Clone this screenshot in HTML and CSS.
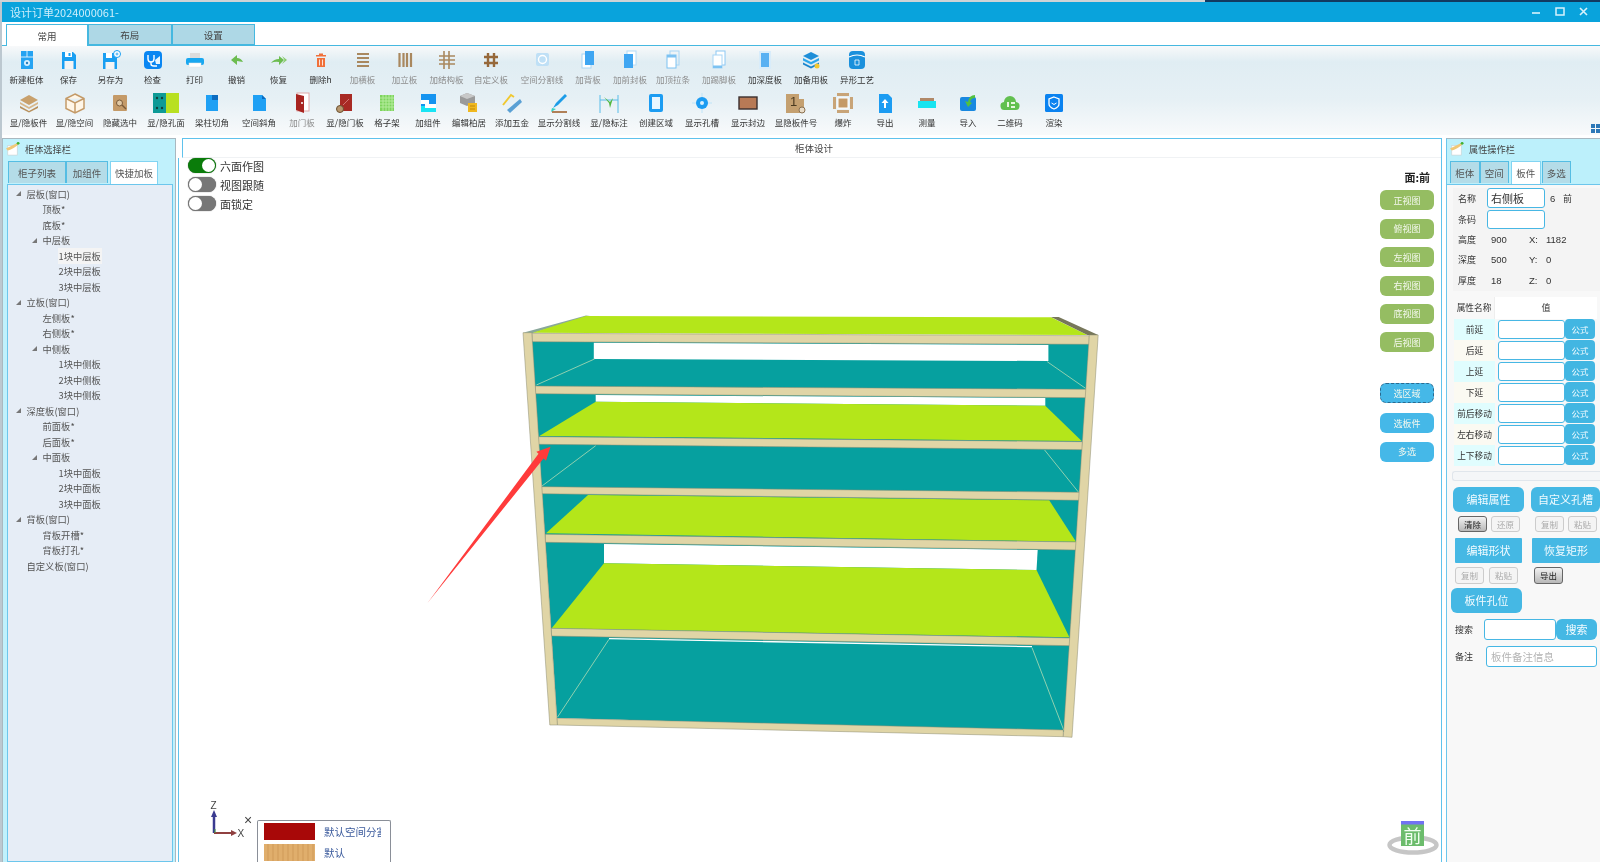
FILE: index.html
```html
<!DOCTYPE html>
<html lang="zh">
<head>
<meta charset="utf-8">
<title>设计订单</title>
<link rel="stylesheet" href="styles.css">
</head>
<body>
<div class="desk">
  <div class="strip"></div>
  <div class="window">
    <header class="titlebar">
      <span class="title">设计订单2024000061-</span>
      <div class="winctl">
        <svg viewBox="0 0 24 20" class="wc"><path d="M8 11h8" stroke="#d8f2fc" stroke-width="1.6"/></svg>
        <svg viewBox="0 0 24 20" class="wc"><rect x="8" y="6" width="8" height="7" fill="none" stroke="#d8f2fc" stroke-width="1.5"/></svg>
        <svg viewBox="0 0 24 20" class="wc"><path d="M8 6l7 7M15 6l-7 7" stroke="#d8f2fc" stroke-width="1.6"/></svg>
      </div>
    </header>
    <nav class="tabbar">
      <div class="toptab active">常用</div>
      <div class="toptab">布局</div>
      <div class="toptab">设置</div>
    </nav>
    <section class="ribbon">
      <div class="toolrow row1">
        <div class="tool"><svg class="ico" viewBox="0 0 24 24"><rect x="6" y="3" width="12" height="18" fill="#25a3f2"/><path d="M6 9h12M12 3v6" stroke="#fff" stroke-width=".8"/><circle cx="12" cy="15" r="3" fill="#d8f0ff"/><circle cx="12" cy="15" r="1.2" fill="#2a80c0"/></svg><span>新建柜体</span></div>
        <div class="tool"><svg class="ico" viewBox="0 0 24 24"><path d="M5 4h11l3 3v14H5z" fill="#1a9ff2"/><rect x="8" y="4" width="7" height="5" fill="#fff"/><rect x="11.500" y="5" width="2" height="3" fill="#1a9ff2"/><rect x="7.500" y="13" width="9" height="8" fill="#f4f4f4"/></svg><span>保存</span></div>
        <div class="tool"><svg class="ico" viewBox="0 0 24 24"><path d="M4 5h11l3 3v13H4z" fill="#1a9ff2"/><rect x="7" y="5" width="6" height="5" fill="#fff"/><rect x="6.500" y="14" width="9" height="7" fill="#f4f4f4"/><circle cx="18" cy="6" r="3.500" fill="#fff" stroke="#1a9ff2"/><path d="M16.500 6h3M18 4.500v3" stroke="#1a9ff2" stroke-width=".8"/></svg><span>另存为</span></div>
        <div class="tool"><svg class="ico" viewBox="0 0 24 24"><rect x="3" y="3" width="18" height="18" rx="4" fill="#0a86f2"/><path d="M7 7v4q0 3 3 3t3-3V7M10 14v2q0 2 3 2h3" fill="none" stroke="#fff" stroke-width="1.4"/><path d="M14 12l5-4v8h-4z" fill="#e8f6ff"/></svg><span>检查</span></div>
        <div class="tool"><svg class="ico" viewBox="0 0 24 24"><rect x="7" y="5" width="10" height="5" fill="#dcdcdc"/><rect x="3" y="10" width="18" height="7" rx="2" fill="#18a7f0"/><rect x="6" y="15" width="12" height="4" fill="#fff" stroke="#e4e4e4" stroke-width=".5"/></svg><span>打印</span></div>
        <div class="tool"><svg class="ico" viewBox="0 0 24 24"><path d="M6 12l6-5v3q4 0 6 4l-6-1v4z" fill="#6cbc50"/></svg><span>撤销</span></div>
        <div class="tool"><svg class="ico" viewBox="0 0 24 24"><path d="M17 12l-5-4v3q-5 0-8 4 4-2 8-1v3z" fill="#6cbc50"/><path d="M15 8l5 4-5 4 2.500-4z" fill="#86ca68"/></svg><span>恢复</span></div>
        <div class="tool"><svg class="ico" viewBox="0 0 24 24"><path d="M10 7V5.500h4V7h3v1.500H7V7zM8 10h8v9H8z" fill="#f0703a"/><path d="M10.500 11.500v6M13.500 11.500v6" stroke="#fff" stroke-width=".8"/></svg><span>删除h</span></div>
        <div class="tool off"><svg class="ico" viewBox="0 0 24 24"><path d="M6 6h12M6 10h12M6 14h12M6 18h12" stroke="#a9885f" stroke-width="2.200"/></svg><span>加横板</span></div>
        <div class="tool off"><svg class="ico" viewBox="0 0 24 24"><path d="M6.500 5v14M10.500 5v14M14 5v14M18 5v14" stroke="#a9885f" stroke-width="2.200"/></svg><span>加立板</span></div>
        <div class="tool off"><svg class="ico" viewBox="0 0 24 24"><path d="M9 3v18M14 3v18M4 8h16M4 12h16M4 16h16" stroke="#a9885f" stroke-width="1.600"/></svg><span>加结构板</span></div>
        <div class="tool off"><svg class="ico" viewBox="0 0 24 24"><path d="M9 5v14M15 5v14M5 9h14M5 15h14" stroke="#96683a" stroke-width="2.400"/></svg><span>自定义板</span></div>
        <div class="tool off wide"><svg class="ico" viewBox="0 0 24 24"><rect x="6" y="5" width="13" height="13" rx="2" fill="#bfe0f6"/><circle cx="12.500" cy="11.500" r="4" fill="none" stroke="#fff" stroke-width="1.400"/></svg><span>空间分割线</span></div>
        <div class="tool off"><svg class="ico" viewBox="0 0 24 24"><rect x="6" y="6" width="9" height="14" fill="#fff" stroke="#a8d6f6"/><rect x="9" y="3" width="9" height="14" fill="#3fa6f2"/></svg><span>加背板</span></div>
        <div class="tool off"><svg class="ico" viewBox="0 0 24 24"><rect x="9" y="3" width="9" height="14" fill="#fff" stroke="#b4dcf8"/><rect x="6" y="6" width="9" height="14" fill="#3fa6f2"/></svg><span>加前封板</span></div>
        <div class="tool off"><svg class="ico" viewBox="0 0 24 24"><rect x="9" y="3" width="9" height="14" fill="none" stroke="#a8d6f6"/><rect x="6" y="7" width="9" height="13" fill="#fff" stroke="#7cc2f2"/><rect x="6" y="7" width="9" height="2.500" fill="#7cc2f2"/></svg><span>加顶拉条</span></div>
        <div class="tool off"><svg class="ico" viewBox="0 0 24 24"><rect x="9" y="3" width="9" height="14" fill="#fff" stroke="#8cc8f4"/><rect x="6" y="7" width="9" height="13" fill="#fff" stroke="#a8d6f6"/><rect x="6" y="17.500" width="9" height="2.500" fill="#7cc2f2"/></svg><span>加踢脚板</span></div>
        <div class="tool"><svg class="ico" viewBox="0 0 24 24"><rect x="6" y="3" width="12" height="18" fill="#d8ecfa"/><rect x="8" y="5" width="8" height="14" fill="#58b0f2"/></svg><span>加深度板</span></div>
        <div class="tool"><svg class="ico" viewBox="0 0 24 24"><path d="M12 4l8 4-8 4-8-4z" fill="#1e8ed8"/><path d="M4 10l8 4 8-4v2.500l-8 4-8-4z" fill="#2aa6ec"/><path d="M4 14.500l8 4 8-4v2l-8 4-8-4z" fill="#1a84cc"/><circle cx="18" cy="18" r="2.500" fill="#f4c830"/></svg><span>加备用板</span></div>
        <div class="tool"><svg class="ico" viewBox="0 0 24 24"><rect x="4" y="3" width="16" height="18" rx="4" fill="#1a90dc"/><path d="M4 9q8-4 16 0" fill="none" stroke="#fff" stroke-width="1.200"/><path d="M10 12h4v5h-4z" fill="none" stroke="#fff" stroke-width=".8"/></svg><span>异形工艺</span></div>
      </div>
      <div class="toolrow row2">
        <div class="tool"><svg class="ico" viewBox="0 0 24 24"><path d="M12 4l9 5-9 5-9-5z" fill="#c8a06c"/><path d="M3 11l9 5 9-5v2l-9 5-9-5z" fill="#d8b88c"/><path d="M3 15l9 5 9-5v2l-9 4.500-9-4.500z" fill="#b8905c"/></svg><span>显/隐板件</span></div>
        <div class="tool"><svg class="ico" viewBox="0 0 24 24"><path d="M12 3l9 4.500v10L12 22l-9-4.500v-10zM3 7.500l9 4.500 9-4.500M12 12v10" fill="#fff6e8" stroke="#c49a68" stroke-width="1.500"/></svg><span>显/隐空间</span></div>
        <div class="tool"><svg class="ico" viewBox="0 0 24 24"><rect x="5" y="4" width="14" height="16" rx="1" fill="#c49a68"/><circle cx="11.500" cy="12" r="3" fill="#e0c8a4" stroke="#7a5a38"/><path d="M14 14l4 4" stroke="#7a5a38" stroke-width="1.500"/></svg><span>隐藏选中</span></div>
        <div class="tool"><svg class="ico icob" viewBox="0 0 28 24"><rect x="1" y="2" width="13" height="20" fill="#0e9a96"/><rect x="14" y="2" width="13" height="20" fill="#b8e022"/><g fill="#12403c"><circle cx="5" cy="7" r="1.200"/><circle cx="10" cy="7" r="1.200"/><circle cx="5" cy="17" r="1.200"/><circle cx="10" cy="17" r="1.200"/></g></svg><span>显/隐孔面</span></div>
        <div class="tool"><svg class="ico" viewBox="0 0 24 24"><path d="M6 4h12v16H6z" fill="#1fa0f4"/><rect x="12" y="4" width="6" height="5" fill="#0c6cc0"/></svg><span>梁柱切角</span></div>
        <div class="tool"><svg class="ico" viewBox="0 0 24 24"><path d="M6 4h9l4 4v12H6z" fill="#1fa0f4"/><path d="M15 4l4 4h-4z" fill="#0c6cc0"/></svg><span>空间斜角</span></div>
        <div class="tool off"><svg class="ico" viewBox="0 0 24 24"><rect x="7" y="2" width="12" height="18" fill="#fff" stroke="#e0a8a8"/><path d="M6 3l8 2v17l-8-3z" fill="#a82420"/><circle cx="12" cy="12" r="1" fill="#fff"/></svg><span>加门板</span></div>
        <div class="tool"><svg class="ico" viewBox="0 0 24 24"><rect x="7" y="3" width="12" height="17" fill="#a82a24"/><path d="M10 14l6-6" stroke="#d88" stroke-width=".8"/><circle cx="7" cy="18" r="3.500" fill="#b89870" stroke="#6a5030"/></svg><span>显/隐门板</span></div>
        <div class="tool"><svg class="ico dots" viewBox="0 0 24 24"><rect x="5" y="4" width="14" height="16" fill="#7ed45e"/><path d="M5 7h14M5 10h14M5 13h14M5 16h14M8 4v16M11 4v16M14 4v16M17 4v16" stroke="#b4ec9c" stroke-width="1"/></svg><span>格子架</span></div>
        <div class="tool"><svg class="ico" viewBox="0 0 24 24"><rect x="5" y="3" width="15" height="18" fill="#1694f0"/><path d="M5 9h8v4h7v4H9v-4H5z" fill="#fff"/><path d="M5 15h4v2h11v4H5z" fill="#18e4f4"/></svg><span>加组件</span></div>
        <div class="tool"><svg class="ico" viewBox="0 0 24 24"><path d="M10 2l8 3v7l-8 3-7-3V5z" fill="#9a9a9a"/><path d="M3 5l7 3 8-3-8-3z" fill="#c8c8c8"/><path d="M11 12h9v9h-9z" fill="#f0b820"/><path d="M13 15h5M13 18h5" stroke="#c08808"/></svg><span>编辑柏居</span></div>
        <div class="tool"><svg class="ico" viewBox="0 0 24 24"><path d="M3 14l8-10 3 2" fill="none" stroke="#f0c830" stroke-width="2"/><path d="M7 19L20 8l2 3L10 22z" fill="#5aa0d4"/></svg><span>添加五金</span></div>
        <div class="tool wide"><svg class="ico" viewBox="0 0 24 24"><path d="M6 17l3-5 9-9 2 2-9 9z" fill="#1c9ce8"/><path d="M5 17l4 1-5 3z" fill="#38d0c0"/><rect x="5" y="20" width="15" height="2" fill="#b08058"/></svg><span>显示分割线</span></div>
        <div class="tool wide"><svg class="ico" viewBox="0 0 24 24"><path d="M3 4v18M21 4v18M3 9h18" stroke="#58bce8" stroke-width="1"/><path d="M7 6l6 5 3-4-3 10-1-5z" fill="#52b840"/></svg><span>显/隐标注</span></div>
        <div class="tool"><svg class="ico" viewBox="0 0 24 24"><rect x="5" y="3" width="14" height="18" rx="2" fill="#1c9cf2"/><rect x="8" y="6" width="8" height="12" fill="#e8f6ff"/></svg><span>创建区域</span></div>
        <div class="tool"><svg class="ico" viewBox="0 0 24 24"><path d="M12 2v20M2 12h20" stroke="#bfe4f8"/><circle cx="12" cy="12" r="6" fill="#1c9cf2"/><circle cx="12" cy="12" r="2" fill="#d8f0ff"/></svg><span>显示孔槽</span></div>
        <div class="tool"><svg class="ico" viewBox="0 0 24 24"><rect x="3" y="6" width="18" height="12" fill="#b87a56" stroke="#3a3030" stroke-width="1.400"/></svg><span>显示封边</span></div>
        <div class="tool wide"><svg class="ico" viewBox="0 0 24 24"><path d="M2 3h13v5h5v14H2z" fill="#c4a070"/><text x="6" y="15" class="icot">1</text><circle cx="18" cy="19" r="3" fill="#e8dcc8" stroke="#8a7050"/></svg><span>显隐板件号</span></div>
        <div class="tool"><svg class="ico" viewBox="0 0 24 24"><rect x="7" y="7" width="10" height="10" fill="#c49a68" stroke="#fff"/><path d="M6 2h12v3H6zM6 19h12v3H6zM2 6h3v12H2zM19 6h3v12h-3z" fill="#c8a478"/></svg><span>爆炸</span></div>
        <div class="tool"><svg class="ico" viewBox="0 0 24 24"><path d="M6 3h9l4 4v15H6z" fill="#1c9cf2"/><path d="M12 8l3.500 4H13v5h-2v-5H8.500z" fill="#fff"/></svg><span>导出</span></div>
        <div class="tool"><svg class="ico" viewBox="0 0 24 24"><rect x="5" y="7" width="14" height="4" fill="#b08868"/><rect x="3" y="10" width="18" height="7" fill="#18e4f0"/></svg><span>测量</span></div>
        <div class="tool"><svg class="ico" viewBox="0 0 24 24"><rect x="4" y="6" width="16" height="14" rx="2" fill="#1888e0"/><path d="M19 4q-6 0-7 7l-3-1 3 6 4-4-2-1q1-4 5-4z" fill="#52c040"/></svg><span>导入</span></div>
        <div class="tool"><svg class="ico" viewBox="0 0 24 24"><path d="M7 19a4 4 0 0 1-1-8 6 6 0 0 1 12 0 4 4 0 0 1-1 8z" fill="#62c050"/><path d="M9 11h2v5H9zM13 11h4v2h-4zM13 15h4v2h-4z" fill="#e8f8e0"/></svg><span>二维码</span></div>
        <div class="tool"><svg class="ico" viewBox="0 0 24 24"><rect x="3" y="3" width="18" height="18" rx="1.500" fill="#0a82f0"/><path d="M12 6l5 2v5q0 3-5 5-5-2-5-5V8z" fill="none" stroke="#fff" stroke-width="1.300"/><path d="M9.500 12q2.500 3 5 0" fill="none" stroke="#fff"/></svg><span>渲染</span></div>
      </div>
      <div class="gridmark"><i></i><i></i><i></i><i></i></div>
    </section>
    <main class="workspace">
      <aside class="leftpanel">
        <div class="phead"><svg class="picon" viewBox="0 0 16 16"><rect x="3" y="5" width="10" height="10" fill="#fff" stroke="#ccc" stroke-width=".6"/><path d="M1 8q4-2 12-6l1 2q-6 5-11 6z" fill="#f0c878"/><circle cx="14" cy="2.500" r="1.500" fill="#40b030"/></svg><span>柜体选择栏</span></div>
        <div class="ptabs ltabs">
          <div class="ptab">柜子列表</div>
          <div class="ptab">加组件</div>
          <div class="ptab active">快捷加板</div>
        </div>
        <div class="tree">
          <div class="node l0"><i class="tri"></i>层板(窗口)</div>
          <div class="node l1"><i class="sp"></i>顶板*</div>
          <div class="node l1"><i class="sp"></i>底板*</div>
          <div class="node l1"><i class="tri"></i>中层板</div>
          <div class="node l2"><i class="sp"></i><span class="hl">1块中层板</span></div>
          <div class="node l2"><i class="sp"></i>2块中层板</div>
          <div class="node l2"><i class="sp"></i>3块中层板</div>
          <div class="node l0"><i class="tri"></i>立板(窗口)</div>
          <div class="node l1"><i class="sp"></i>左侧板*</div>
          <div class="node l1"><i class="sp"></i>右侧板*</div>
          <div class="node l1"><i class="tri"></i>中侧板</div>
          <div class="node l2"><i class="sp"></i>1块中侧板</div>
          <div class="node l2"><i class="sp"></i>2块中侧板</div>
          <div class="node l2"><i class="sp"></i>3块中侧板</div>
          <div class="node l0"><i class="tri"></i>深度板(窗口)</div>
          <div class="node l1"><i class="sp"></i>前面板*</div>
          <div class="node l1"><i class="sp"></i>后面板*</div>
          <div class="node l1"><i class="tri"></i>中面板</div>
          <div class="node l2"><i class="sp"></i>1块中面板</div>
          <div class="node l2"><i class="sp"></i>2块中面板</div>
          <div class="node l2"><i class="sp"></i>3块中面板</div>
          <div class="node l0"><i class="tri"></i>背板(窗口)</div>
          <div class="node l1"><i class="sp"></i>背板开槽*</div>
          <div class="node l1"><i class="sp"></i>背板打孔*</div>
          <div class="node l0"><i class="sp"></i>自定义板(窗口)</div>
        </div>
      </aside>
      <section class="center">
        <div class="chead">柜体设计</div>
        <div class="canvas">
          <svg class="scene" viewBox="179 158 1262 704">
            <!-- back and side faces -->
            <polygon fill="#06a09f" points="532,341 1089,344 1064,732 557,718"/>
            <!-- top face -->
            <polygon fill="#8aa89a" points="523,332.700 586,315.500 590,316 533,333"/>
            <polygon fill="#b4e61a" points="532.500,332.700 586,316 1051,317.300 1087.400,335"/>
            <polygon fill="#77775a" points="1051,317 1058.700,317 1098.200,335 1087.400,335"/>
            <!-- compartment 1 -->
            <polygon fill="#fff" points="593.800,342.700 1048.400,345 1048.400,361 593.800,359"/>
            <path class="ln" d="M594.500 359L536.400 385M1047.200 361.700L1085.500 388.300"/>
            <!-- compartment 2 -->
            <polygon fill="#fff" points="595.700,395 1045.300,398 1045.300,405.700 595.700,401.700"/>
            <polygon fill="#b4e61a" points="595.700,401.700 1045.300,405.700 1081.700,441 539.400,436"/>
            <!-- compartment 3 -->
            <path class="ln" d="M595.700 445.700L542 486M1044.600 450L1078.600 492.300"/>
            <!-- compartment 4 -->
            <polygon fill="#b4e61a" points="588,495 1049.200,500.300 1076,541.700 546,533.300"/>
            <!-- compartment 5 -->
            <polygon fill="#fff" points="604,544 1037.700,550 1036.500,570 604,563.300"/>
            <polygon fill="#b4e61a" points="604,563.300 1036.500,570 1069.400,637.300 551.700,628.300"/>
            <!-- compartment 6 -->
            <polygon fill="#fff" points="609,638 1032,646 1032,647.300 609,639.300"/>
            <path class="ln" d="M609 639.300L557.400 717.300M1032 647.700L1063.700 730"/>
            <!-- boards -->
            <g class="board">
              <polygon points="531.800,333.300 1089.300,335.700 1089.300,344.300 532.500,341.700"/>
              <polygon points="535.200,386 1086.300,389.300 1086.300,397.700 535.200,393.700"/>
              <polygon points="538.300,436.700 1082.400,441.700 1082.400,449.700 538.300,444.300"/>
              <polygon points="541.300,486.700 1079.800,492.300 1079.800,500.300 541.300,493.700"/>
              <polygon points="545.200,534.300 1076.700,542 1076.700,550 545.200,542.300"/>
              <polygon points="551,628.300 1070.200,638 1070.200,645.700 551.700,636"/>
              <polygon points="556.600,718.300 1063.300,730 1063.300,736.700 557.400,725"/>
              <polygon points="523,332.700 531.800,332.700 557.400,725 549.800,725"/>
              <polygon points="1089.300,335 1098.200,335 1072,737.300 1063.300,736.700"/>
            </g>
            <!-- annotation arrow -->
            <polygon fill="#ff3b3b" points="427.500,603 543.500,458.500 546,460.700 550.500,446.700 536.400,451.700 538.500,453.800"/>
            <!-- axis -->
            <path d="M214 833V816" stroke="#3a3a90" stroke-width="2.500"/>
            <path d="M214 810l-3 7h6z" fill="#3a3a90"/>
            <path d="M214 833h18" stroke="#904040" stroke-width="2"/>
            <path d="M237 833l-6-3v6z" fill="#904040"/>
            <path d="M215 833v-4" stroke="#40a040" stroke-width="1"/>
            <text x="210.500" y="809" class="axt">Z</text>
            <text x="237.500" y="837" class="axt">X</text>
            <text x="244" y="825" class="axc">×</text>
            <!-- view cube -->
            <ellipse cx="1413" cy="845" rx="23.500" ry="7.500" fill="none" stroke="#c6c6c6" stroke-width="4.500"/>
            <rect x="1401" y="821" width="23" height="25" fill="#6cbc6c"/>
            <rect x="1401" y="821" width="23" height="3.500" fill="#7272f2"/>
            <text x="1412.500" y="843" class="cubet">前</text>
          </svg>
          <div class="toggles">
            <div class="tg"><span class="sw on"><i></i></span>六面作图</div>
            <div class="tg"><span class="sw"><i></i></span>视图跟随</div>
            <div class="tg"><span class="sw"><i></i></span>面锁定</div>
          </div>
          <div class="viewbtns">
            <div class="face">面:前</div>
            <div class="vb">正视图</div>
            <div class="vb">俯视图</div>
            <div class="vb">左视图</div>
            <div class="vb">右视图</div>
            <div class="vb">底视图</div>
            <div class="vb">后视图</div>
            <div class="vb blue focus">选区域</div>
            <div class="vb blue next">选板件</div>
            <div class="vb blue">多选</div>
          </div>
          <div class="legend">
            <div class="lg"><i class="swatch red"></i><span>默认空间分割</span></div>
            <div class="lg"><i class="swatch tan"></i><span>默认</span></div>
          </div>
        </div>
      </section>
      <aside class="rightpanel">
        <div class="phead"><svg class="picon" viewBox="0 0 16 16"><rect x="3" y="5" width="10" height="10" fill="#fff" stroke="#ccc" stroke-width=".6"/><path d="M1 8q4-2 12-6l1 2q-6 5-11 6z" fill="#f0c878"/><circle cx="14" cy="2.500" r="1.500" fill="#40b030"/></svg><span>属性操作栏</span></div>
        <div class="ptabs rtabs">
          <div class="ptab">柜体</div>
          <div class="ptab">空间</div>
          <div class="ptab active">板件</div>
          <div class="ptab">多选</div>
        </div>
        <div class="rbody">
          <div class="form">
            <div class="frow first"><label>名称</label><div class="inp name">右侧板</div><span class="num">6</span><span>前</span></div>
            <div class="frow code"><label>条码</label><div class="inp"></div></div>
            <div class="drow"><label>高度</label><b>900</b><em>X:</em><b>1182</b></div>
            <div class="drow"><label>深度</label><b>500</b><em>Y:</em><b>0</b></div>
            <div class="drow"><label>厚度</label><b>18</b><em>Z:</em><b>0</b></div>
          </div>
          <div class="props">
            <div class="phd"><span>属性名称</span><span>值</span></div>
            <div class="prow a"><span>前延</span><div class="inp"></div><div class="gs">公式</div></div>
            <div class="prow b"><span>后延</span><div class="inp"></div><div class="gs">公式</div></div>
            <div class="prow a"><span>上延</span><div class="inp"></div><div class="gs">公式</div></div>
            <div class="prow b"><span>下延</span><div class="inp"></div><div class="gs">公式</div></div>
            <div class="prow a"><span>前后移动</span><div class="inp"></div><div class="gs">公式</div></div>
            <div class="prow b"><span>左右移动</span><div class="inp"></div><div class="gs">公式</div></div>
            <div class="prow a"><span>上下移动</span><div class="inp"></div><div class="gs">公式</div></div>
          </div>
          <div class="hscroll"></div>
          <div class="btnrow r1"><div class="big w71">编辑属性</div><div class="big w69">自定义孔槽</div></div>
          <div class="btnrow r2"><div class="sm on">清除</div><div class="sm">还原</div><div class="sm far">复制</div><div class="sm">粘贴</div></div>
          <div class="btnrow r3"><div class="big sq w67">编辑形状</div><div class="big sq w68">恢复矩形</div></div>
          <div class="btnrow r4"><div class="sm">复制</div><div class="sm">粘贴</div><div class="sm on far">导出</div></div>
          <div class="btnrow r5"><div class="big w71">板件孔位</div></div>
          <div class="lrow s"><label>搜索</label><div class="inp"></div><div class="big sbtn">搜索</div></div>
          <div class="lrow m"><label>备注</label><div class="inp ph">板件备注信息</div></div>
        </div>
      </aside>
    </main>
  </div>
</div>
</body>
</html>
```
FILE: styles.css
```css
* { box-sizing: border-box; }
html, body { margin: 0; height: 100%; }
body {
  font-family: "Noto Sans CJK SC", "Liberation Sans", sans-serif;
  background: #bcc8d0;
  overflow: hidden;
}
i { display: block; font-style: normal; }
em { font-style: normal; }
b { font-weight: normal; }

.desk {
  width: 1600px;
  height: 862px;
  display: flex;
  flex-direction: column;
  overflow: hidden;
  filter: blur(0.45px);
}
.strip {
  height: 2px;
  flex: none;
  background: linear-gradient(to right, #cfd3d6 1205px, #123a60 1205px);
}
.window {
  flex: 1;
  min-height: 0;
  margin-left: 2px;
  display: flex;
  flex-direction: column;
  background: #fff;
}

/* title bar */
.titlebar {
  height: 20px;
  flex: none;
  background: #09a3dc;
  display: flex;
  align-items: center;
  padding-left: 8px;
  color: #cdeefb;
  font-size: 11px;
}
.winctl { margin-left: auto; display: flex; padding-right: 4px; }
.wc { width: 24px; height: 20px; display: block; }

/* top tabs */
.tabbar {
  height: 24px;
  flex: none;
  display: flex;
  align-items: flex-end;
  padding-left: 4px;
  background: #fff;
  border-bottom: 1px solid #45b8e0;
}
.toptab {
  width: 83.5px;
  height: 21px;
  background: #aed8e6;
  border: 1px solid #45b8e0;
  color: #444;
  font-size: 9.5px;
  display: flex;
  align-items: center;
  justify-content: center;
}
.toptab.active {
  width: 82px;
  height: 22px;
  background: #fff;
  margin-bottom: -1px;
  border-bottom: 0;
}

/* ribbon */
.ribbon {
  height: 89px;
  flex: none;
  position: relative;
  background: linear-gradient(#f8f9fa 0, #e0edf3 18%, #e6f0f5 60%, #f8fafb 100%);
  padding: 2px 0 0 3.5px;
  display: flex;
  flex-direction: column;
  gap: 6px;
}
.toolrow { display: grid; }
.row1 {
  grid-template-columns: repeat(11, 42px) 47px 55px 37px 47px 39px 53px 39px 53px 39px;
}
.row2 {
  grid-template-columns: 46px 46px 45px 47px 45px 49px 37px 49px 35px 47px 35px 51px 43px 57px 37px 55px 37px 59px 35px 49px 35px 47px 37px 51px;
}
.tool {
  display: flex;
  flex-direction: column;
  align-items: center;
  min-width: 0;
  font-size: 8.5px;
  color: #333;
  white-space: nowrap;
}
.tool span { height: 12px; line-height: 12px; margin-top: 1px; }
.tool.off span { color: #8c8c8c; }
.ico { width: 24px; height: 24px; display: block; flex: none; }
.icob { width: 28px; }
.icot { font-family: "Liberation Sans", sans-serif; font-size: 13px; fill: #4a3a20; }
.gridmark {
  position: absolute;
  right: 0;
  bottom: 2px;
  width: 9px;
  display: grid;
  grid-template-columns: 4px 4px;
  gap: 1px;
}
.gridmark i { height: 4px; background: #2c78b8; }

/* workspace */
.workspace {
  flex: 1;
  min-height: 0;
  display: flex;
  padding-top: 3px;
  background: #fff;
}
.phead {
  height: 22px;
  flex: none;
  display: flex;
  align-items: center;
  gap: 5px;
  padding: 0 0 3px 2px;
  font-size: 9.2px;
  color: #444;
}
.picon { width: 15px; height: 15px; display: block; }

.leftpanel {
  width: 174px;
  flex: none;
  background: #c0f1fc;
  border: 1px solid #a9b8c0;
  border-bottom: 0;
  display: flex;
  flex-direction: column;
}
.ptabs { height: 23px; flex: none; display: flex; }
.ptab {
  height: 22px;
  background: #b4dce8;
  border: 1px solid #55bde3;
  border-bottom: 0;
  color: #555;
  font-size: 9.5px;
  display: flex;
  align-items: center;
  justify-content: center;
}
.ptab.active { background: #fff; height: 23px; border-color: #82d4f2; }
.ltabs { padding-left: 5px; }
.ltabs .ptab:nth-child(1) { width: 58px; }
.ltabs .ptab:nth-child(2) { width: 42px; margin-right: 2px; }
.ltabs .ptab:nth-child(3) { width: 48px; }

.tree {
  flex: 1;
  margin: 0 2px 0 3.5px;
  background: #e6edf6;
  border: 1px solid #6cc6ec;
  padding-top: 1px;
  font-size: 9.3px;
  color: #555;
}
.node { height: 15.5px; display: flex; align-items: center; white-space: nowrap; }
.l0 { padding-left: 8px; }
.l1 { padding-left: 24px; }
.l2 { padding-left: 40px; }
.tri, .sp { width: 11px; flex: none; height: 5px; }
.tri::before {
  content: "";
  display: block;
  width: 0;
  height: 0;
  border-left: 5px solid transparent;
  border-bottom: 5px solid #777;
}
.hl { background: #f4f4f4; padding: 1px 1px; margin-left: -1px; }

/* center */
.center {
  width: 1264px;
  flex: none;
  margin-left: 2px;
  margin-right: 4px;
  border-right: 1px solid #5fc2ec;
  display: flex;
  flex-direction: column;
}
.chead {
  height: 20px;
  flex: none;
  margin-left: 4px;
  padding-left: 4px;
  text-align: center;
  font-size: 9.5px;
  line-height: 19px;
  color: #444;
  border-top: 1px solid #5fc2ec;
  border-left: 1px solid #5fc2ec;
  border-bottom: 1px solid #f0f2f4;
}
.canvas {
  flex: 1;
  position: relative;
  min-height: 0;
  border-left: 1px solid #5fc2ec;
}
.scene { position: absolute; inset: 0; width: 100%; height: 100%; display: block; }
.ln { stroke: #8fd0b0; stroke-width: 1; fill: none; }
.board polygon { fill: #e0d5a6; stroke: #8a8a70; stroke-width: .5; }
.axt { font-family: "Liberation Sans", sans-serif; font-size: 10px; fill: #444; }
.axc { font-family: "Liberation Sans", sans-serif; font-size: 14px; fill: #444; }
.cubet { font-size: 18px; fill: #f0fff0; text-anchor: middle; }

.toggles {
  position: absolute;
  left: 9px;
  top: 0;
  display: flex;
  flex-direction: column;
  gap: 4px;
}
.tg { display: flex; align-items: center; gap: 4px; height: 15px; font-size: 11px; color: #333; }
.sw {
  width: 28px;
  height: 15px;
  border-radius: 8px;
  background: #777;
  padding: 1px;
  display: flex;
  box-shadow: 0 0 1px #555;
}
.sw i { width: 13px; height: 13px; border-radius: 50%; background: #fff; }
.sw.on { background: #0a7c0a; justify-content: flex-end; }

.viewbtns {
  position: absolute;
  right: 7px;
  top: 12px;
  width: 54px;
  display: flex;
  flex-direction: column;
  gap: 8.4px;
}
.face {
  height: 14px;
  margin-bottom: -2px;
  margin-right: 4px;
  text-align: right;
  font-size: 11px;
  font-weight: bold;
  line-height: 14px;
  color: #222;
}
.vb {
  height: 20px;
  border-radius: 6px;
  background: #95bd62;
  color: #f4f8ee;
  font-size: 9px;
  display: flex;
  align-items: center;
  justify-content: center;
}
.vb.blue { background: #45b8e8; }
.vb.focus { margin-top: 22.5px; border: 1px dashed #2a6a90; }
.vb.next { margin-top: 1.5px; }

.legend {
  position: absolute;
  left: 78px;
  bottom: 0;
  width: 134px;
  height: 42px;
  background: #fff;
  border: 1px solid #8a8f98;
  border-bottom: 0;
  border-radius: 2px 2px 0 0;
  padding: 2px 0 0 6px;
  display: flex;
  flex-direction: column;
  gap: 4px;
}
.lg {
  display: flex;
  align-items: center;
  gap: 9px;
  height: 17px;
  font-size: 10.5px;
  color: #3a5a9c;
  white-space: nowrap;
}
.lg span { width: 57px; overflow: hidden; }
.swatch { width: 51px; height: 17px; flex: none; }
.swatch.red { background: #a80808; }
.swatch.tan { background: repeating-linear-gradient(90deg, #e0ae6c 0 3px, #d8a462 3px 5px); }

/* right panel */
.rightpanel {
  flex: 1;
  min-width: 0;
  background: #bcf0fb;
  border-top: 1px solid #a9b8c0;
  border-left: 1px solid #6cc6ec;
  display: flex;
  flex-direction: column;
}
.rtabs { padding-left: 3px; }
.rtabs .ptab { width: 29.5px; }
.rtabs .ptab:nth-child(2) { margin-right: 2px; }
.rtabs .ptab:nth-child(3) { margin-right: 1px; }
.rbody { flex: 1; background: #f8f8f8; border-top: 1px solid #6cc6ec; font-size: 9px; color: #333; }
.form { margin: 3px 0 0 6px; background: #f4f4f4; }
.inp {
  background: #fff;
  border: 1px solid #47b7e4;
  border-radius: 3px;
  display: flex;
  align-items: center;
}
.frow { display: flex; align-items: center; height: 20px; padding-left: 5px; }
.frow.first { margin-bottom: 2px; }
.frow label { width: 29px; flex: none; }
.frow .inp { width: 58px; height: 100%; }
.frow.code { height: 19px; }
.inp.name { font-size: 11px; padding-left: 3px; color: #333; }
.num { margin-left: 5px; width: 13px; font-family: "Liberation Sans", sans-serif; font-size: 9.5px; }
.drow { display: flex; align-items: center; height: 20.5px; padding-left: 5px; }
.drow label { width: 33px; flex: none; }
.drow b { width: 38px; flex: none; font-family: "Liberation Sans", sans-serif; font-size: 9.5px; }
.drow em { width: 17px; flex: none; font-family: "Liberation Sans", sans-serif; font-size: 9.5px; }
.drow b:last-child { width: auto; }
.props { margin: 6px 3px 0 7px; }
.phd { display: grid; grid-template-columns: 41px 1fr; height: 22px; align-items: center; text-align: center; }
.phd span:first-child { font-size: 8.7px; border-right: 1px solid #eee; line-height: 22px; }
.phd span:last-child { background: #fff; line-height: 22px; }
.prow { display: flex; align-items: center; height: 21px; }
.prow span {
  width: 41px;
  flex: none;
  height: 100%;
  text-align: center;
  line-height: 21px;
  font-size: 8.7px;
  margin-right: 3px;
}
.prow.a span { background: #e0fdfe; }
.prow.b span { background: #fbfaf2; }
.prow .inp { width: 67px; height: 19px; flex: none; }
.gs {
  width: 30px;
  height: 20px;
  margin-left: 0;
  background: #42b6e2;
  border-radius: 4px;
  color: #eefaff;
  font-size: 8.5px;
  display: flex;
  align-items: center;
  justify-content: center;
}
.hscroll {
  height: 10px;
  margin: 5px 0 0 5px;
  background: #f4f6f8;
  border: 1px solid #e0e6ec;
  border-right: 0;
  border-radius: 3px 0 0 3px;
}
.btnrow { display: flex; align-items: flex-start; }
.big {
  height: 25px;
  background: #45b8e4;
  border-radius: 6px;
  color: #f2fbff;
  font-size: 11px;
  display: flex;
  align-items: center;
  justify-content: center;
  flex: none;
  white-space: nowrap;
}
.big.sq { border-radius: 1px; }
.w71 { width: 71px; }
.w69 { width: 69px; }
.w67 { width: 67px; }
.w68 { width: 68px; }
.r1 { margin-top: 6px; padding-left: 6px; gap: 7px; }
.r2 { margin-top: 4px; padding-left: 11px; gap: 4px; }
.r3 { margin-top: 6px; padding-left: 8px; gap: 10px; }
.r4 { margin-top: 4px; padding-left: 8px; gap: 5px; }
.r5 { margin-top: 4px; padding-left: 4px; }
.sm {
  width: 29px;
  height: 16px;
  background: #f4f4f4;
  border: 1px solid #ccc;
  border-radius: 3px;
  color: #aaa;
  font-size: 8.5px;
  display: flex;
  align-items: center;
  justify-content: center;
  flex: none;
}
.r4 .sm { height: 17px; }
.sm.on { background: linear-gradient(#f2f2f2, #b8b8b8); border-color: #666; color: #222; }
.sm.far { margin-left: 11px; }
.lrow { display: flex; align-items: center; height: 21px; padding-left: 8px; }
.lrow label { width: 29px; flex: none; }
.lrow.s { margin-top: 6px; }
.lrow.s .inp { width: 72px; height: 100%; }
.sbtn { width: 41px; height: 100%; }
.lrow.m { margin-top: 6px; }
.lrow.m label { width: 31px; }
.lrow.m .inp { width: 111px; height: 100%; }
.inp.ph { color: #b4b4b4; font-size: 10.5px; padding-left: 4px; }
```
